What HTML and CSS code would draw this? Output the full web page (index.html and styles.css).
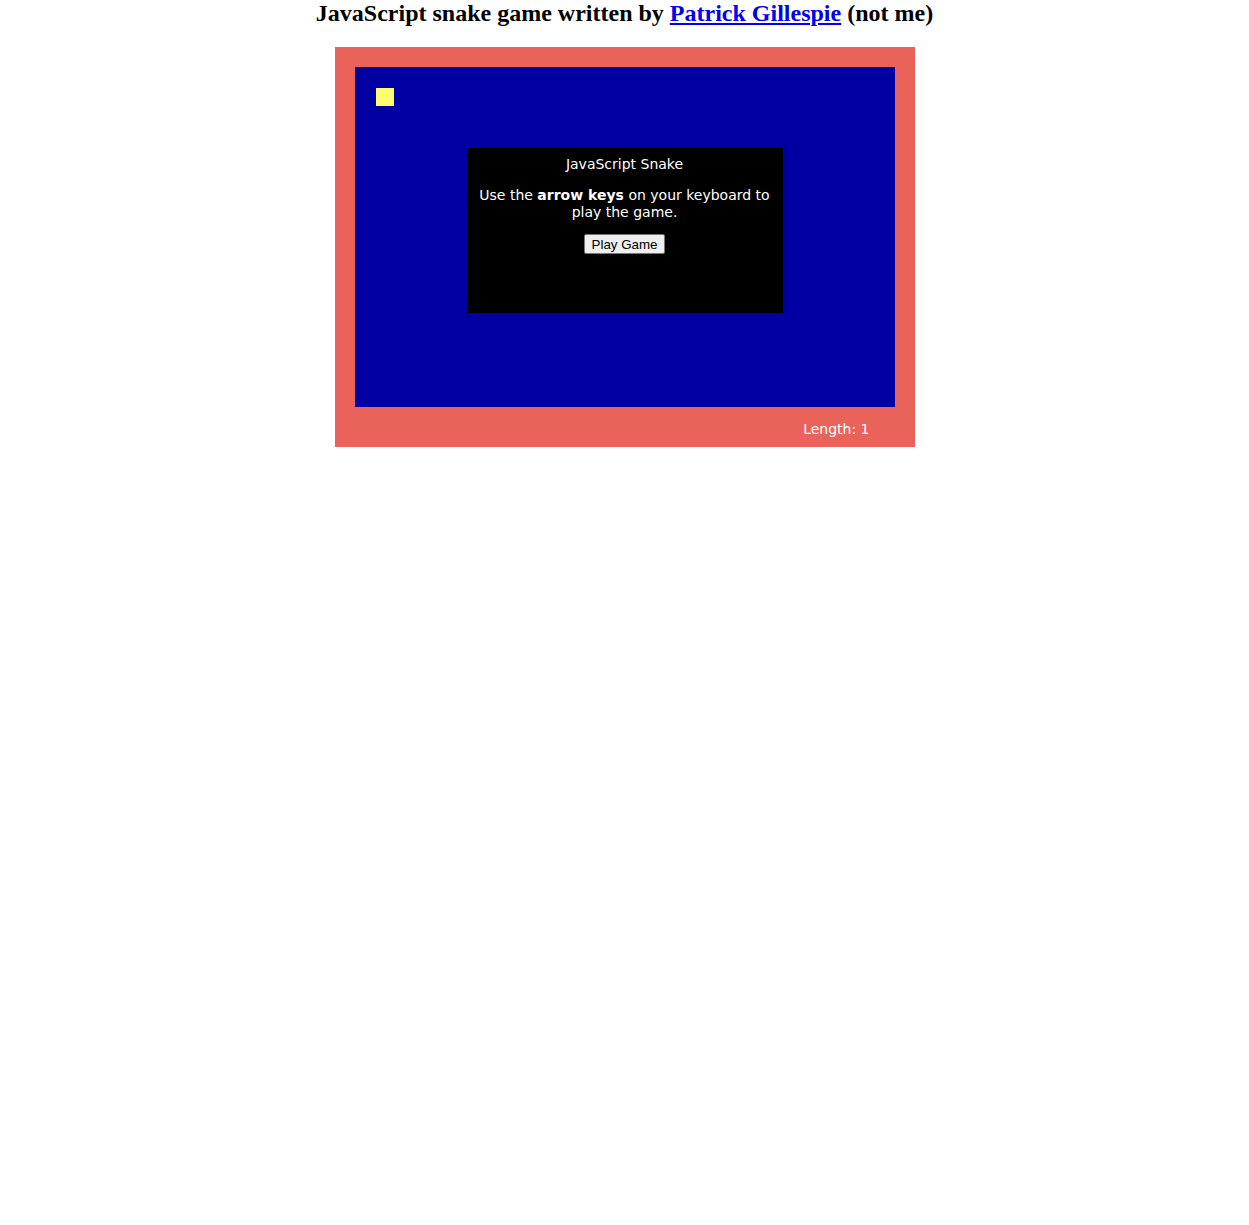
FILE: index.html
```
<!DOCTYPE html>
<html>
<head>
<meta charset="utf-8">
<title>JavaScript Snake</title>
<link rel="stylesheet" href="styles.css">
</head>
<body>
<h2 class="title">JavaScript snake game written by <a href="#">Patrick Gillespie</a> (not me)</h2>
<div class="game">
  <div class="board">
    <div class="snake-block"></div>
    <div class="welcome">
      <div class="welcome-title">JavaScript Snake</div>
      <p class="welcome-text">Use the <strong>arrow keys</strong> on your keyboard to play the game.</p>
      <button class="play-btn" type="button">Play Game</button>
    </div>
  </div>
  <div class="status">Length: 1</div>
</div>
</body>
</html>
```
FILE: styles.css
```
body {
  margin: 0;
  font-family: "Liberation Serif", "Times New Roman", serif;
  background: #ffffff;
}
.title {
  margin: 0 0 20px;
  font-size: 24px;
  font-weight: bold;
  text-align: center;
  line-height: 27px;
}
.title a {
  color: #0000ee;
}
.game {
  width: 540px;
  margin: 0 auto;
  padding: 20px 20px 0;
  background: #e9635b;
  height: 380px;
}
.board {
  position: relative;
  width: 540px;
  height: 340px;
  background: #0000a2;
}
.snake-block {
  position: absolute;
  left: 21px;
  top: 21px;
  width: 18px;
  height: 18px;
  background: #fbfb6e;
}
.welcome {
  position: absolute;
  left: 112px;
  top: 81px;
  width: 316px;
  height: 165px;
  box-sizing: border-box;
  padding: 8px 8px 0;
  background: #000000;
  color: #ffffff;
  text-align: center;
  font-family: "DejaVu Sans", Verdana, sans-serif;
  font-size: 14px;
  line-height: 17px;
}
.welcome-title {
  margin: 0;
}
.welcome-text {
  margin: 14px 0 13px;
}
.play-btn {
  font-family: "Liberation Sans", Arial, sans-serif;
  font-size: 13.333px;
  padding: 1px 6px;
  height: 20px;
  width: 81px;
  border: 1px solid #767676;
  border-radius: 2px;
  background: #efefef;
  color: #000;
}
.status {
  height: 40px;
  display: flex;
  align-items: center;
  justify-content: flex-end;
  padding-right: 25px;
  color: #ffffff;
  font-family: "DejaVu Sans", Verdana, sans-serif;
  font-size: 14px;
  box-sizing: border-box;
  padding-top: 3px;
}
```
